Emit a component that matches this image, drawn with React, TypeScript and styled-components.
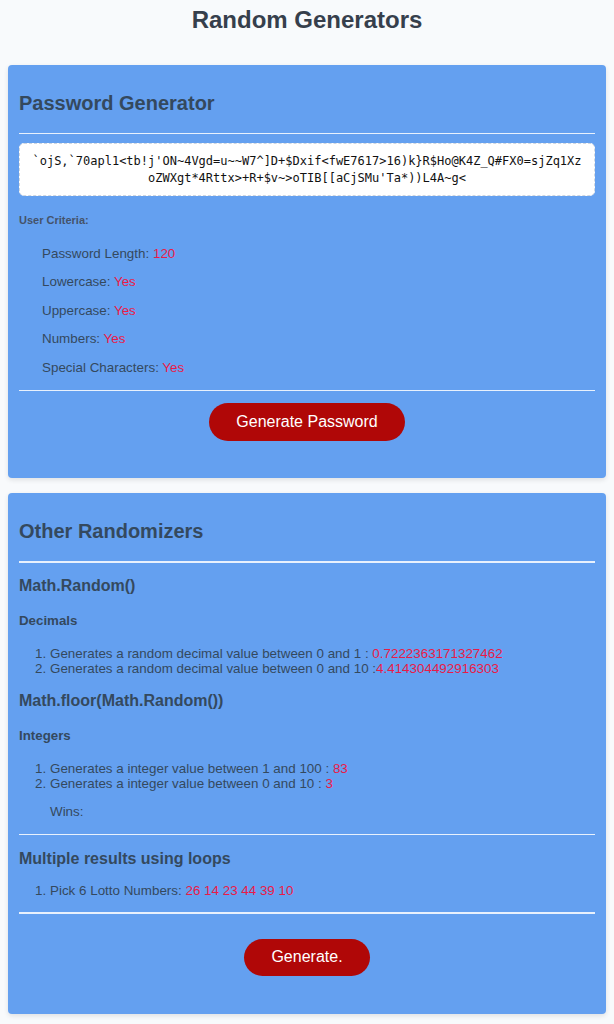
import React from 'react';
import styled, { createGlobalStyle } from 'styled-components';

const colors = {
    PAGE: '#f8fafc',
    CARD: '#64a0f0',
    TEXT: '#34495e',
    TITLE: '#363f4c',
    VALUE: '#ea1a47',
    BUTTON: '#b00707',
    RULE: 'rgba(255, 255, 255, 0.85)',
};

const GlobalStyle = createGlobalStyle`
    body {
        margin: 0;
        background: ${colors.PAGE};
        font-family: 'Liberation Sans', Arial, sans-serif;
        color: ${colors.TEXT};
    }
`;

const Page = styled.div`
    padding: 0 8px 10px;
`;

const Title = styled.h1`
    margin: 0;
    padding-top: 6px;
    height: 59px;
    text-align: center;
    font-size: 24px;
    line-height: 28px;
    font-weight: bold;
    color: ${colors.TITLE};
`;

const Card = styled.section`
    background: ${colors.CARD};
    border-radius: 4px;
    box-shadow: 0 2px 5px rgba(0, 0, 0, 0.1);
    padding: 27px 11px 0;

    & + & {
        margin-top: 15px;
    }
`;

const CardTitle = styled.h2`
    margin: 0;
    font-size: 20px;
    line-height: 23px;
    font-weight: bold;
`;

const Rule = styled.hr<{ thick?: boolean; top?: number }>`
    border: none;
    height: ${props => (props.thick ? '2px' : '1px')};
    background: ${colors.RULE};
    margin: ${props => props.top ?? 18}px 0 0;
`;

const PasswordBox = styled.div`
    margin-top: 9px;
    background: #fff;
    border: 1px dashed #cfd6df;
    border-radius: 5px;
    padding: 9px 12px 8px;
    font-family: 'DejaVu Sans Mono', 'Liberation Mono', monospace;
    font-size: 12px;
    line-height: 17px;
    color: #111;
    text-align: center;
    word-break: break-all;
`;

const CriteriaLabel = styled.h6`
    margin: 18px 0 0;
    font-size: 11px;
    line-height: 13px;
    font-weight: bold;
    color: #44536a;
`;

const CriteriaList = styled.div`
    margin-top: 12px;
    padding-left: 23px;
`;

const Criterion = styled.p`
    margin: 0;
    font-size: 13.4px;
    line-height: 15.5px;
    padding: 6.5px 0;
`;

const Value = styled.span`
    color: ${colors.VALUE};
`;

const ButtonRow = styled.div<{ top: number; bottom: number }>`
    display: flex;
    justify-content: center;
    padding: ${props => `${props.top}px 0 ${props.bottom}px`};
`;

const Button = styled.button<{ tall?: number }>`
    height: ${props => props.tall ?? 38}px;
    padding: 0 27px;
    border: none;
    border-radius: 19px;
    background: ${colors.BUTTON};
    color: #fff;
    font-family: 'Liberation Sans', Arial, sans-serif;
    font-size: 16px;
`;

const SubTitle = styled.h3<{ top: number }>`
    margin: ${props => props.top}px 0 0;
    font-size: 16px;
    line-height: 18px;
    font-weight: bold;
`;

const Group = styled.h5`
    margin: 18.5px 0 0;
    font-size: 13.3px;
    line-height: 15px;
    font-weight: bold;
`;

const Results = styled.ol`
    margin: 18px 0 0;
    padding-left: 31px;
    font-size: 13.4px;
    line-height: 15px;
`;

const Wins = styled.p`
    margin: 12.5px 0 0;
    padding-left: 31px;
    font-size: 13.4px;
    line-height: 16px;
`;

const LoopResults = styled.div`
    height: 27px;
    overflow: hidden;
`;

const LoopList = styled(Results)`
    margin-top: 15.5px;
`;

const criteria = [
    { label: 'Password Length', value: '120' },
    { label: 'Lowercase', value: 'Yes' },
    { label: 'Uppercase', value: 'Yes' },
    { label: 'Numbers', value: 'Yes' },
    { label: 'Special Characters', value: 'Yes' },
];

const password =
    "`ojS,`70apl1<tb!j'ON~4Vgd=u~~W7^]D+$Dxif<fwE7617>16)k}R$Ho@K4Z_Q#FX0=sjZq1XzoZWXgt*4Rttx>+R+$v~>oTIB[[aCjSMu'Ta*))L4A~g<";

const App = () => (
    <Page>
        <GlobalStyle />
        <Title>Random Generators</Title>

        <Card>
            <CardTitle>Password Generator</CardTitle>
            <Rule />
            <PasswordBox>{password}</PasswordBox>
            <CriteriaLabel>User Criteria:</CriteriaLabel>
            <CriteriaList>
                {criteria.map(c => (
                    <Criterion key={c.label}>
                        {c.label}: <Value>{c.value}</Value>
                    </Criterion>
                ))}
            </CriteriaList>
            <Rule top={8} />
            <ButtonRow top={12} bottom={37}>
                <Button>Generate Password</Button>
            </ButtonRow>
        </Card>

        <Card>
            <CardTitle>Other Randomizers</CardTitle>
            <Rule thick />
            <SubTitle top={14}>Math.Random()</SubTitle>
            <Group>Decimals</Group>
            <Results>
                <li>
                    Generates a random decimal value between 0 and 1 : <Value>0.7222363171327462</Value>
                </li>
                <li>
                    Generates a random decimal value between 0 and 10 :<Value>4.414304492916303</Value>
                </li>
            </Results>
            <SubTitle top={15.5}>Math.floor(Math.Random())</SubTitle>
            <Group>Integers</Group>
            <Results>
                <li>
                    Generates a integer value between 1 and 100 : <Value>83</Value>
                </li>
                <li>
                    Generates a integer value between 0 and 10 : <Value>3</Value>
                </li>
            </Results>
            <Wins>Wins:</Wins>
            <Rule top={14} />
            <SubTitle top={15}>Multiple results using loops</SubTitle>
            <LoopResults>
                <LoopList>
                    <li>
                        Pick 6 Lotto Numbers: <Value>26 14 23 44 39 10</Value>
                    </li>
                </LoopList>
            </LoopResults>
            <Rule thick top={17} />
            <ButtonRow top={25} bottom={38}>
                <Button tall={37}>Generate.</Button>
            </ButtonRow>
        </Card>
    </Page>
);

export default App;
